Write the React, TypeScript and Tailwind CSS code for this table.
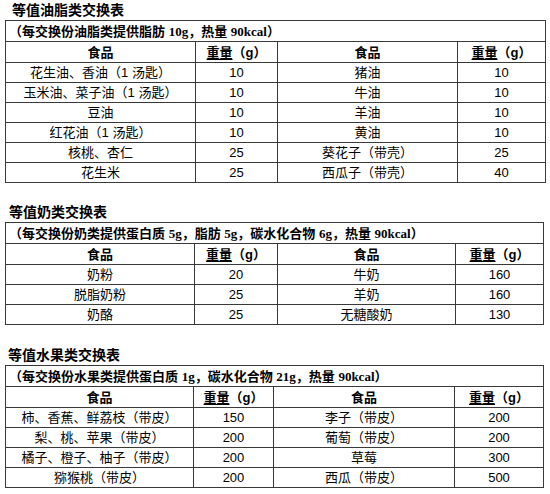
const cnSans = "font-['Liberation_Sans','Noto_Sans_CJK_SC',sans-serif]";

type Row = [string, string, string, string];

const oilRows: Row[] = [
  ["花生油、香油（1 汤匙）", "10", "猪油", "10"],
  ["玉米油、菜子油（1 汤匙）", "10", "牛油", "10"],
  ["豆油", "10", "羊油", "10"],
  ["红花油（1 汤匙）", "10", "黄油", "10"],
  ["核桃、杏仁", "25", "葵花子（带壳）", "25"],
  ["花生米", "25", "西瓜子（带壳）", "40"],
];

const milkRows: Row[] = [
  ["奶粉", "20", "牛奶", "160"],
  ["脱脂奶粉", "25", "羊奶", "160"],
  ["奶酪", "25", "无糖酸奶", "130"],
];

const fruitRows: Row[] = [
  ["柿、香蕉、鲜荔枝（带皮）", "150", "李子（带皮）", "200"],
  ["梨、桃、苹果（带皮）", "200", "葡萄（带皮）", "200"],
  ["橘子、橙子、柚子（带皮）", "200", "草莓", "300"],
  ["猕猴桃（带皮）", "200", "西瓜（带皮）", "500"],
];

function Weight() {
  return (
    <span>
      <span className="underline underline-offset-2">重量</span>
      （g）
    </span>
  );
}

function ExchangeTable({
  title,
  note,
  rows,
  widths,
  titlePad,
}: {
  title: string;
  note: React.ReactNode;
  rows: Row[];
  widths: [number, number, number, number];
  titlePad: string;
}) {
  const total = widths.reduce((a, b) => a + b, 0);
  return (
    <section>
      <h2 className={`h-[20px] ${titlePad} text-[14px] font-bold leading-[20px] text-black`}>{title}</h2>
      <table
        className="table-fixed border-collapse border border-[#3a3a3a] text-[13px] text-black"
        style={{ width: total }}
      >
        <colgroup>
          {widths.map((w, i) => (
            <col key={i} style={{ width: w }} />
          ))}
        </colgroup>
        <tbody>
          <tr className="h-[21px]">
            <td colSpan={4} className="border border-[#3a3a3a] px-[3px] font-bold leading-none">
              {note}
            </td>
          </tr>
          <tr className="h-[21px] font-bold">
            <td className="border border-[#3a3a3a] text-center leading-none">食品</td>
            <td className="border border-[#3a3a3a] text-center leading-none">
              <Weight />
            </td>
            <td className="border border-[#3a3a3a] text-center leading-none">食品</td>
            <td className="border border-[#3a3a3a] text-center leading-none">
              <Weight />
            </td>
          </tr>
          {rows.map((r, i) => (
            <tr key={i} className="h-[20px]">
              {r.map((c, j) => (
                <td key={j} className="border border-[#3a3a3a] text-center leading-none whitespace-nowrap">
                  {c}
                </td>
              ))}
            </tr>
          ))}
        </tbody>
      </table>
    </section>
  );
}

const num = "font-['Liberation_Serif','Noto_Sans_CJK_SC',serif]";

export default function App() {
  return (
    <main className={`h-[494px] w-[550px] overflow-hidden bg-white ${cnSans}`}>
      <div className="flex flex-col pl-[5px]">
        <ExchangeTable
          title="等值油脂类交换表"
          titlePad="pl-[7px]"
          widths={[190, 82, 180, 88]}
          rows={oilRows}
          note={
            <span>
              （每交换份油脂类提供脂肪 <span className={num}>10g</span>，热量 <span className={num}>90kcal</span>）
            </span>
          }
        />
        <div className="mt-[19px]">
          <ExchangeTable
            title="等值奶类交换表"
            titlePad="pl-[4px]"
            widths={[189, 83, 178, 88]}
            rows={milkRows}
            note={
              <span>
                （每交换份奶类提供蛋白质 <span className={num}>5g</span>，脂肪 <span className={num}>5g</span>，碳水化合物{" "}
                <span className={num}>6g</span>，热量 <span className={num}>90kcal</span>）
              </span>
            }
          />
        </div>
        <div className="mt-[20px]">
          <ExchangeTable
            title="等值水果类交换表"
            titlePad="pl-[3px]"
            widths={[188, 80, 181, 89]}
            rows={fruitRows}
            note={
              <span>
                （每交换份水果类提供蛋白质 <span className={num}>1g</span>，碳水化合物 <span className={num}>21g</span>，热量{" "}
                <span className={num}>90kcal</span>）
              </span>
            }
          />
        </div>
      </div>
    </main>
  );
}
